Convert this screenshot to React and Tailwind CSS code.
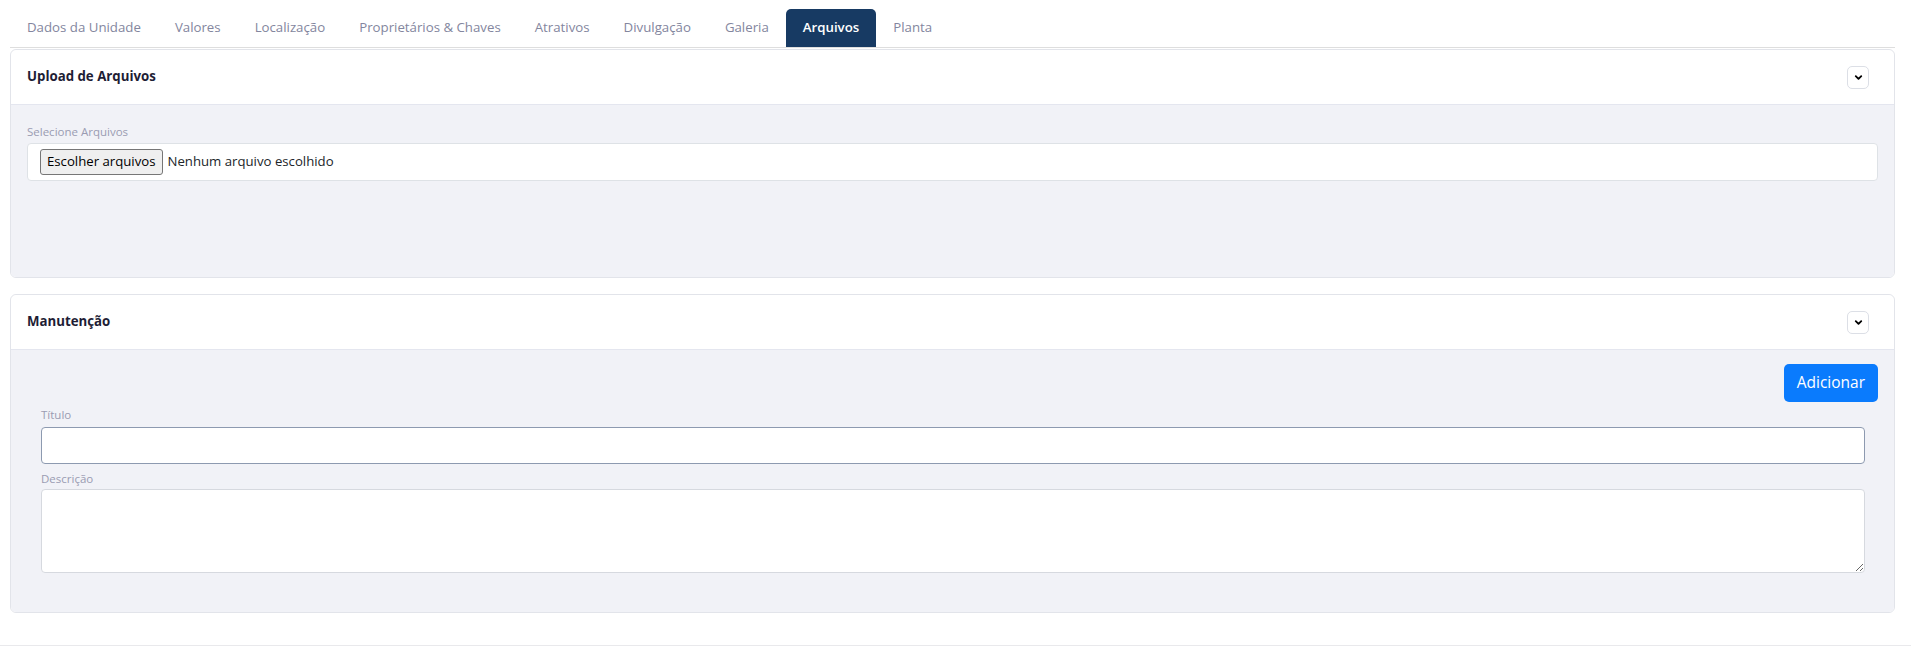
import { ChevronDown } from "lucide-react";

const tabs = [
  "Dados da Unidade",
  "Valores",
  "Localização",
  "Proprietários & Chaves",
  "Atrativos",
  "Divulgação",
  "Galeria",
  "Arquivos",
  "Planta",
];

function PanelHeader({ title }) {
  return (
    <div className="h-[55px] flex items-center justify-between pl-4 pr-[25px] bg-white border-b border-[#e4e6ef] rounded-t-md">
      <h3 className="text-[13.25px] font-bold text-[#1e1d35]">{title}</h3>
      <button className="w-[22px] h-[23px] flex items-center justify-center bg-white border border-[#dcdfe6] rounded-[5px]">
        <ChevronDown className="w-[11px] h-[11px] text-black" strokeWidth={4} />
      </button>
    </div>
  );
}

export default function App() {
  return (
    <div className="min-h-screen bg-white font-['Open_Sans',sans-serif]">
      <div className="px-[10px] pt-[9px] pr-[16px]">
        <nav className="flex border-b border-[#dedede]">
          {tabs.map((t) => (
            <div
              key={t}
              className={
                t === "Arquivos"
                  ? "h-[38px] px-[17px] flex items-center text-[13.25px] font-semibold text-white bg-[#173a63] rounded-t-[5px]"
                  : "h-[38px] px-[17px] flex items-center text-[13.25px] text-[#83869e]"
              }
            >
              {t}
            </div>
          ))}
        </nav>

        <section className="mt-px border border-[#e2e4ea] rounded-md overflow-hidden">
          <PanelHeader title="Upload de Arquivos" />
          <div className="bg-[#f1f2f7] h-[172px] px-4 pt-[19px]">
            <label className="block text-[11.5px] leading-4 text-[#9a9cb2] mb-[3px]">Selecione Arquivos</label>
            <div className="h-[38px] bg-white border border-[#dee2e6] rounded-[4px] flex items-center pl-3 text-[13.2px] text-[#212529]">
              <span className="h-[26px] px-[6px] flex items-center bg-[#efefef] border border-[#767676] rounded-[3px] text-black">
                Escolher arquivos
              </span>
              <span className="ml-[5px]">Nenhum arquivo escolhido</span>
            </div>
          </div>
        </section>

        <section className="mt-[16px] border border-[#e2e4ea] rounded-md overflow-hidden">
          <PanelHeader title="Manutenção" />
          <div className="bg-[#f1f2f7] px-4 pt-[14px] pb-[39px]">
            <div className="flex justify-end">
              <button className="h-[38px] px-[13px] rounded-[5px] bg-[#0a7bfd] text-white text-[15.5px]">
                Adicionar
              </button>
            </div>
            <div className="pl-[14px] pr-[13px]">
              <label className="block mt-[5px] text-[11.5px] leading-4 text-[#9a9cb2] mb-[4px]">Título</label>
              <input className="block w-full h-[37px] bg-white border border-[#8d9ab0] rounded-[4px] outline-none" />
              <label className="block mt-[7px] text-[11.5px] leading-4 text-[#9a9cb2] mb-[2px]">Descrição</label>
              <textarea className="block w-full h-[84px] bg-white border border-[#d6d9df] rounded-[4px] outline-none" />
            </div>
          </div>
        </section>
      </div>
      <div className="mt-[32px] border-t border-[#e9e9ec]" />
    </div>
  );
}
